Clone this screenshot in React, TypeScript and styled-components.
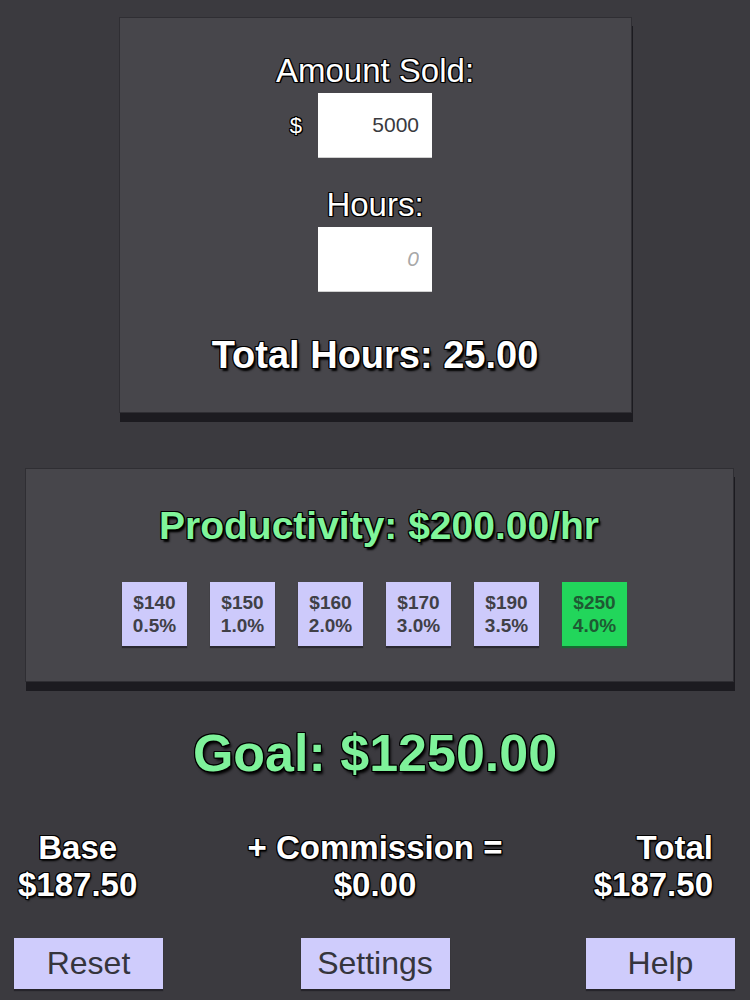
import React, { useState } from "react";
import styled, { createGlobalStyle } from "styled-components";

const GlobalStyle = createGlobalStyle`
  html, body {
    margin: 0;
    padding: 0;
    background: #3b3a3f;
  }
  body {
    font-family: "Liberation Sans", Arial, sans-serif;
  }
`;

const outline = (shadow: string) => `
  text-shadow: -1px -1px 0 #000, 1px -1px 0 #000, -1px 1px 0 #000, 1px 1px 0 #000,
    0 -1px 0 #000, 0 1px 0 #000, -1px 0 0 #000, 1px 0 0 #000, ${shadow};
`;

const rates = [
  { amount: 140, pct: "0.5%" },
  { amount: 150, pct: "1.0%" },
  { amount: 160, pct: "2.0%" },
  { amount: 170, pct: "3.0%" },
  { amount: 190, pct: "3.5%" },
  { amount: 250, pct: "4.0%" },
];

export default function App() {
  const [sold, setSold] = useState("5000");
  const [hours, setHours] = useState("");
  const selected = 5;

  return (
    <>
      <GlobalStyle />
      <Page>
        <InputPanel>
          <Label>Amount Sold:</Label>
          <FieldRow>
            <Currency>$</Currency>
            <NumberInput value={sold} onChange={(e) => setSold(e.target.value)} />
            <Spacer />
          </FieldRow>
          <Label $top={28}>Hours:</Label>
          <FieldRow>
            <NumberInput
              value={hours}
              placeholder="0"
              onChange={(e) => setHours(e.target.value)}
            />
          </FieldRow>
          <TotalHours>Total Hours: 25.00</TotalHours>
        </InputPanel>

        <RatePanel>
          <Productivity>Productivity: $200.00/hr</Productivity>
          <RateRow>
            {rates.map((r, i) => (
              <RateBox key={r.amount} $active={i === selected}>
                <span>${r.amount}</span>
                <span>{r.pct}</span>
              </RateBox>
            ))}
          </RateRow>
        </RatePanel>

        <Goal>Goal: $1250.00</Goal>

        <Summary>
          <SummaryCell $align="start" $pad="0 0 0 18px">
            <div>Base</div>
            <div>$187.50</div>
          </SummaryCell>
          <SummaryCell $align="center" $pad="0">
            <div>+ Commission =</div>
            <div>$0.00</div>
          </SummaryCell>
          <SummaryCell $align="end" $pad="0 37px 0 0">
            <div>Total</div>
            <div>$187.50</div>
          </SummaryCell>
        </Summary>

        <Toolbar>
          <ActionButton $align="start" $pad="14px">Reset</ActionButton>
          <ActionButton $align="center" $pad="0">Settings</ActionButton>
          <ActionButton $align="end" $pad="15px">Help</ActionButton>
        </Toolbar>
      </Page>
    </>
  );
}

const Page = styled.div`
  width: 750px;
  height: 1000px;
  overflow: hidden;
  display: flex;
  flex-direction: column;
  align-items: center;
  padding-top: 17px;
  box-sizing: border-box;
  color: #fff;
`;

const Panel = styled.div`
  background: #47464b;
  border: 1px solid #2f2e33;
  box-sizing: border-box;
  box-shadow: 1px 9px 0 #1c1b20;
  display: flex;
  flex-direction: column;
  align-items: center;
`;

const InputPanel = styled(Panel)`
  width: 513px;
  height: 396px;
  padding-top: 34px;
`;

const Label = styled.div<{ $top?: number }>`
  font-size: 33px;
  line-height: 37px;
  margin-top: ${(p) => p.$top ?? 0}px;
  ${outline("1px 1px 1px #000")}
`;

const FieldRow = styled.div`
  display: flex;
  align-items: center;
  margin-top: 4px;
`;

const Currency = styled.span`
  width: 27px;
  margin-right: 16px;
  text-align: right;
  font-size: 22px;
  ${outline("1px 1px 1px #000")}
`;

const Spacer = styled.span`
  width: 43px;
`;

const NumberInput = styled.input`
  width: 114px;
  height: 65px;
  box-sizing: border-box;
  border: none;
  border-bottom: 1px solid #d0d0d0;
  background: #fff;
  text-align: right;
  padding: 0 13px;
  font-family: "Liberation Sans", Arial, sans-serif;
  font-size: 21px;
  color: #3a3a3e;
  outline: none;
  &::placeholder {
    color: #a8a8a8;
    font-style: italic;
  }
`;

const TotalHours = styled.div`
  margin-top: 42px;
  font-size: 38px;
  font-weight: 700;
  ${outline("2px 3px 2px #000")}
`;

const RatePanel = styled(Panel)`
  width: 709px;
  height: 214px;
  margin-top: 55px;
  margin-left: 8px;
  padding-top: 35px;
`;

const Productivity = styled.div`
  font-size: 39px;
  font-weight: 700;
  color: #80f59a;
  ${outline("2px 3px 2px #000")}
`;

const RateRow = styled.div`
  display: flex;
  gap: 23px;
  margin-top: 34px;
  margin-left: -9px;
`;

const RateBox = styled.div<{ $active?: boolean }>`
  width: 65px;
  height: 64px;
  display: flex;
  flex-direction: column;
  align-items: center;
  justify-content: center;
  background: ${(p) => (p.$active ? "#22d65b" : "#cdcafb")};
  color: ${(p) => (p.$active ? "#1e5a33" : "#404047")};
  box-shadow: 0 2px 1px ${(p) => (p.$active ? "#176b32" : "#2a2930")};
  font-size: 19px;
  font-weight: 700;
  line-height: 23px;
`;

const Goal = styled.div`
  margin-top: 41px;
  font-size: 52px;
  font-weight: 700;
  color: #7ef29a;
  ${outline("2px 3px 3px #000")}
`;

const Summary = styled.div`
  width: 100%;
  display: grid;
  grid-template-columns: 1fr auto 1fr;
  margin-top: 46px;
`;

const SummaryCell = styled.div<{ $align: string; $pad: string }>`
  justify-self: ${(p) => p.$align};
  padding: ${(p) => p.$pad};
  text-align: ${(p) => (p.$align === "end" ? "right" : "center")};
  font-size: 33px;
  font-weight: 700;
  line-height: 37px;
  ${outline("1px 2px 2px #000")}
`;

const Toolbar = styled.div`
  width: 100%;
  display: grid;
  grid-template-columns: 1fr auto 1fr;
  margin-top: 35px;
`;

const ActionButton = styled.button<{ $align: string; $pad: string }>`
  justify-self: ${(p) => p.$align};
  margin: ${(p) => (p.$align === "start" ? `0 0 0 ${p.$pad}` : p.$align === "end" ? `0 ${p.$pad} 0 0` : "0")};
  width: 149px;
  height: 51px;
  border: none;
  background: #cfccfc;
  box-shadow: 0 2px 1px #25242a;
  color: #35353d;
  font-family: "Liberation Sans", Arial, sans-serif;
  font-size: 32px;
  padding: 0;
`;
